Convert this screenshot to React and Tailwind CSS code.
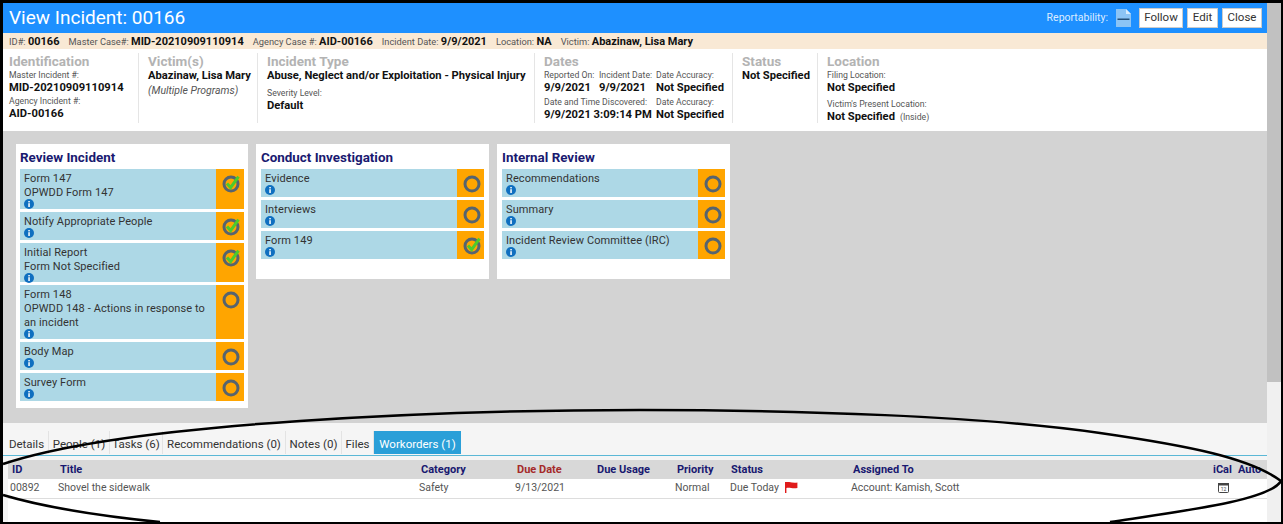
const font = { fontFamily: 'Roboto, "Noto Sans", sans-serif' };

function InfoIcon() {
  return (
    <svg width="10" height="10" viewBox="0 0 10 10" className="block -mt-[1px]">
      <circle cx="5" cy="5" r="5" fill="#0f6fc0" />
      <rect x="4.3" y="4.2" width="1.5" height="3.8" fill="#fff" />
      <rect x="4.3" y="2" width="1.5" height="1.4" fill="#fff" />
    </svg>
  );
}

function StatusIcon({ done }) {
  return (
    <svg width="20" height="20" viewBox="0 0 20 20" className="block">
      <circle cx="10" cy="10" r="7" fill="none" stroke="#56646f" strokeWidth="3" />
      {done && <path d="M6 9.5l3.6 4L17.5 2.5" fill="none" stroke="#4ccb2c" strokeWidth="3" />}
    </svg>
  );
}

function TaskRow({ lines, done, h, side }) {
  return (
    <div className={`flex ${h}`}>
      <div className="flex-1 bg-[#add8e6] pl-[4px] pt-[3px] text-[11px] leading-[14px] tracking-[0.1px] text-[#333]">
        {lines.map((l) => (
          <div key={l} className="whitespace-nowrap">{l}</div>
        ))}
        <InfoIcon />
      </div>
      <div className={`${side} shrink-0 bg-[#ffa500] flex justify-center pl-[2px] pt-[5px]`}>
        <StatusIcon done={done} />
      </div>
    </div>
  );
}

function Card({ title, rows, box, side }) {
  return (
    <div className={`${box} bg-white pt-[5px]`}>
      <div className="text-[13.4px] font-bold text-[#191970] h-[20px] leading-[17px]">{title}</div>
      <div className="flex flex-col gap-[3px]">
        {rows.map((r) => (
          <TaskRow key={r.lines[0]} side={side} {...r} />
        ))}
      </div>
    </div>
  );
}

function Label({ children }) {
  return <div className="text-[8.7px] leading-[12px] text-[#555] whitespace-nowrap">{children}</div>;
}

function Value({ children }) {
  return <div className="text-[11.2px] leading-[14px] font-bold text-[#111] whitespace-nowrap">{children}</div>;
}

function Heading({ children }) {
  return <div className="text-[13.5px] leading-[16px] font-bold text-[#b3b3b3]">{children}</div>;
}

function Meta({ label, value }) {
  return (
    <span className="mr-[9px]">
      <span className="text-[#555]">{label}</span> <b className="text-[11px] text-[#111]">{value}</b>
    </span>
  );
}

const review = [
  { lines: ["Form 147", "OPWDD Form 147"], done: true, h: "h-[40px]" },
  { lines: ["Notify Appropriate People"], done: true, h: "h-[28px]" },
  { lines: ["Initial Report", "Form Not Specified"], done: true, h: "h-[39px]" },
  { lines: ["Form 148", "OPWDD 148 - Actions in response to", "an incident"], h: "h-[54px]" },
  { lines: ["Body Map"], h: "h-[28px]" },
  { lines: ["Survey Form"], h: "h-[28px]" },
];
const investigation = [
  { lines: ["Evidence"], h: "h-[28px]" },
  { lines: ["Interviews"], h: "h-[28px]" },
  { lines: ["Form 149"], done: true, h: "h-[28px]" },
];
const internal = [
  { lines: ["Recommendations"], h: "h-[28px]" },
  { lines: ["Summary"], h: "h-[28px]" },
  { lines: ["Incident Review Committee (IRC)"], h: "h-[28px]" },
];

const tabs = [
  ["Details", "w-[44px]"],
  ["People (1)", "w-[61px]"],
  ["Tasks (6)", "w-[53px]"],
  ["Recommendations (0)", "w-[123px]"],
  ["Notes (0)", "w-[56px]"],
  ["Files", "w-[32px]"],
];

const columns = "grid grid-cols-[48px_361px_96px_80px_80px_54px_122px_360px_25px_1fr]";

export default function App() {
  return (
    <div className="relative w-[1283px] h-[524px] overflow-hidden bg-black pl-[3px] pt-[3px] pr-[2px] pb-[2px] flex" style={font}>
      <div className="w-[1264px] h-full flex flex-col bg-white">
        <div className="h-[30px] bg-[#1e90ff] flex items-center pl-[6px] pr-[5px]">
          <div className="text-[19px] text-white flex-1">View Incident: 00166</div>
          <span className="text-[10.5px] text-[#dcecff] mr-[8px]">Reportability:</span>
          <svg width="15" height="18" viewBox="0 0 15 18" className="mr-[8px]">
            <path d="M0 0h10l5 5v13H0z" fill="#8cc4f5" />
            <path d="M10 0l5 5h-5z" fill="#d9ecfc" />
            <rect x="1.5" y="9.5" width="12" height="1.5" fill="#24507a" />
          </svg>
          <div className="flex gap-[4px]">
            <button className="h-[20px] w-[44px] bg-white border border-[#ccc] text-[11.5px] text-[#333]">Follow</button>
            <button className="h-[20px] w-[31px] bg-white border border-[#ccc] text-[11.5px] text-[#333]">Edit</button>
            <button className="h-[20px] w-[40px] bg-white border border-[#ccc] text-[11.5px] text-[#333]">Close</button>
          </div>
        </div>

        <div className="h-[16px] bg-[#f9e9d5] pl-[6px] text-[9.3px] leading-[17px] whitespace-nowrap">
          <Meta label="ID#:" value="00166" />
          <Meta label="Master Case#:" value="MID-20210909110914" />
          <Meta label="Agency Case #:" value="AID-00166" />
          <Meta label="Incident Date:" value="9/9/2021" />
          <Meta label="Location:" value="NA" />
          <Meta label="Victim:" value="Abazinaw, Lisa Mary" />
        </div>

        <div className="h-[82px] bg-white flex pt-[4px] pb-[8px]">
          <div className="w-[136px] pl-[6px] border-r border-[#e5e5e5]">
            <Heading>Identification</Heading>
            <Label>Master Incident #:</Label>
            <Value>MID-20210909110914</Value>
            <Label>Agency Incident #:</Label>
            <Value>AID-00166</Value>
          </div>
          <div className="w-[119px] pl-[9px] border-r border-[#e5e5e5]">
            <Heading>Victim(s)</Heading>
            <Value>Abazinaw, Lisa Mary</Value>
            <div className="text-[10.5px] italic text-[#555] leading-[15px]">(Multiple Programs)</div>
          </div>
          <div className="w-[277px] pl-[9px] border-r border-[#e5e5e5]">
            <Heading>Incident Type</Heading>
            <Value>Abuse, Neglect and/or Exploitation - Physical Injury</Value>
            <div className="h-[4px]" />
            <Label>Severity Level:</Label>
            <Value>Default</Value>
          </div>
          <div className="w-[198px] pl-[9px] border-r border-[#e5e5e5]">
            <Heading>Dates</Heading>
            <div className="grid grid-cols-[55px_57px_1fr]">
              <Label>Reported On:</Label>
              <Label>Incident Date:</Label>
              <Label>Date Accuracy:</Label>
              <Value>9/9/2021</Value>
              <Value>9/9/2021</Value>
              <Value>Not Specified</Value>
              <div className="col-span-2 mt-[1px]"><Label>Date and Time Discovered:</Label></div>
              <div className="mt-[1px]"><Label>Date Accuracy:</Label></div>
              <div className="col-span-2"><Value>9/9/2021 3:09:14 PM</Value></div>
              <Value>Not Specified</Value>
            </div>
          </div>
          <div className="w-[85px] pl-[9px] border-r border-[#e5e5e5]">
            <Heading>Status</Heading>
            <Value>Not Specified</Value>
          </div>
          <div className="pl-[9px]">
            <Heading>Location</Heading>
            <Label>Filing Location:</Label>
            <Value>Not Specified</Value>
            <div className="h-[3px]" />
            <Label>Victim's Present Location:</Label>
            <div className="flex items-baseline gap-[5px]">
              <Value>Not Specified</Value>
              <span className="text-[8.7px] text-[#555]">(Inside)</span>
            </div>
          </div>
        </div>

        <div className="h-[292px] bg-[#d3d3d3] flex items-start gap-[8px] pl-[13px] pt-[13px]">
          <Card title="Review Incident" rows={review} box="w-[232px] h-[264px] px-[4px]" side="w-[28px]" />
          <Card title="Conduct Investigation" rows={investigation} box="w-[233px] h-[135px] px-[5px]" side="w-[27px]" />
          <Card title="Internal Review" rows={internal} box="w-[233px] h-[135px] px-[5px]" side="w-[27px]" />
        </div>

        <div className="h-[33px] bg-[#f5f5f5] flex items-end pl-[2px] pb-px border-b border-[#5bb8d6]">
          {tabs.map(([t, w]) => (
            <div key={t} className={`${w} shrink-0 h-[23px] pt-[2px] text-[11.5px] leading-[23px] text-center text-[#333] border-r border-[#e3e3e3] whitespace-nowrap`}>
              {t}
            </div>
          ))}
          <div className="w-[87px] h-[23px] pt-[2px] bg-[#2a9fd8] text-white text-[11.5px] leading-[23px] text-center whitespace-nowrap">Workorders (1)</div>
        </div>

        <div className="flex-1 bg-[#f5f5f5] pt-[4px] pl-[5px]">
          <div className="h-full bg-white">
            <div className={`${columns} h-[19px] bg-[#d8d8d8] text-[11px] leading-[19px] font-bold text-[#191970] whitespace-nowrap`}>
              <div className="pl-[4px]">ID</div>
              <div className="pl-[4px]">Title</div>
              <div className="pl-[4px]">Category</div>
              <div className="pl-[4px] text-[#a52a2a]">Due Date</div>
              <div className="pl-[4px]">Due Usage</div>
              <div className="pl-[4px]">Priority</div>
              <div className="pl-[4px]">Status</div>
              <div className="pl-[4px]">Assigned To</div>
              <div className="pl-[4px]">iCal</div>
              <div className="pl-[4px]">Auto</div>
            </div>
            <div className={`${columns} h-[20px] border-b border-[#ddd] text-[10.5px] leading-[18px] text-[#555] whitespace-nowrap`}>
              <div className="pl-[2px]">00892</div>
              <div className="pl-[2px]">Shovel the sidewalk</div>
              <div className="pl-[2px]">Safety</div>
              <div className="pl-[2px]">9/13/2021</div>
              <div />
              <div className="pl-[2px]">Normal</div>
              <div className="pl-[3px] flex items-center gap-[6px] h-[17px]">
                Due Today
                <svg width="13" height="11" viewBox="0 0 13 11">
                  <path d="M0 0v11h1.4V6c3-1.2 6 1.2 11 0V.5C8 1.8 4 -1 0 0z" fill="#e01b1b" />
                </svg>
              </div>
              <div className="pl-[2px]">Account: Kamish, Scott</div>
              <div className="pl-[9px] flex items-center h-[16px]">
                <svg width="11" height="11" viewBox="0 0 11 11">
                  <rect x=".5" y="1.5" width="10" height="9" rx="1" fill="#fff" stroke="#444" />
                  <rect x="0" y="1" width="11" height="2.5" fill="#444" />
                  <text x="5.5" y="9" fontSize="5" textAnchor="middle" fill="#444">12</text>
                </svg>
              </div>
              <div />
            </div>
          </div>
        </div>
      </div>

      <div className="w-[14px] h-full bg-[#f0f0f0]">
        <div className="h-[379px] bg-[#c1c1c1]" />
      </div>

      {/* hand drawn annotation over the tabs */}
      <svg className="absolute left-0 top-0 pointer-events-none" width="1283" height="524" viewBox="0 0 1283 524">
        <path
          d="M3 464C60 445 150 431 300 421C420 413 540 410 640 410C800 410 980 416 1100 433C1190 446 1250 458 1281 481C1270 500 1190 510 1110 522M3 495C40 506 100 516 160 522"
          fill="none"
          stroke="#000"
          strokeWidth="2.5"
        />
      </svg>
    </div>
  );
}
